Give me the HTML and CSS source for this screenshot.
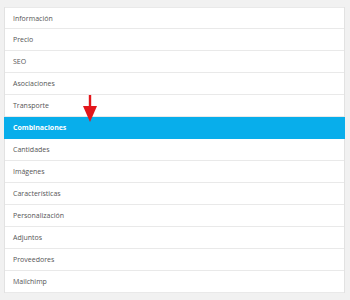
FILE: index.html
```html
<!DOCTYPE html>
<html lang="es">
<head>
<meta charset="utf-8">
<link rel="stylesheet" href="styles.css">
</head>
<body>
<div class="page">
  <ul class="tabs">
    <li class="tab">Información</li>
    <li class="tab">Precio</li>
    <li class="tab">SEO</li>
    <li class="tab">Asociaciones</li>
    <li class="tab">Transporte</li>
    <li class="tab active">Combinaciones
      <svg class="arrow" width="16" height="28" viewBox="0 0 16 28"><rect x="6.8" y="0" width="2.4" height="13" fill="#e3161b"/><polygon points="1,11 15,11 8,27" fill="#e3161b"/></svg>
    </li>
    <li class="tab">Cantidades</li>
    <li class="tab">Imágenes</li>
    <li class="tab">Características</li>
    <li class="tab">Personalización</li>
    <li class="tab">Adjuntos</li>
    <li class="tab">Proveedores</li>
    <li class="tab">Mailchimp</li>
  </ul>
</div>
</body>
</html>
```
FILE: styles.css
```css
html, body {
  margin: 0;
  padding: 0;
  background: #f1f1f1;
}
.page {
  padding: 7px 5px 0 4px;
}
.tabs {
  list-style: none;
  margin: 0;
  padding: 0;
  width: 341px;
  background: #fff;
  border-left: 1px solid #e2e2e2;
  border-right: 1px solid #e2e2e2;
  box-sizing: border-box;
}
.tab {
  position: relative;
  height: 22px;
  box-sizing: border-box;
  border-bottom: 1px solid #e9e9e9;
  padding-left: 8px;
  display: flex;
  align-items: center;
  font-family: "Open Sans", "Noto Sans", sans-serif;
  font-size: 7px;
  color: #555;
}
.tab:first-child {
  border-top: 1px solid #e9e9e9;
}
.tab.active {
  background: #08aeeb;
  color: #fff;
  font-weight: bold;
  margin-left: -1px;
  margin-right: -1px;
  padding-left: 9px;
  border-bottom-color: #08aeeb;
}
.arrow {
  position: absolute;
  left: 78px;
  top: -22px;
}
```
